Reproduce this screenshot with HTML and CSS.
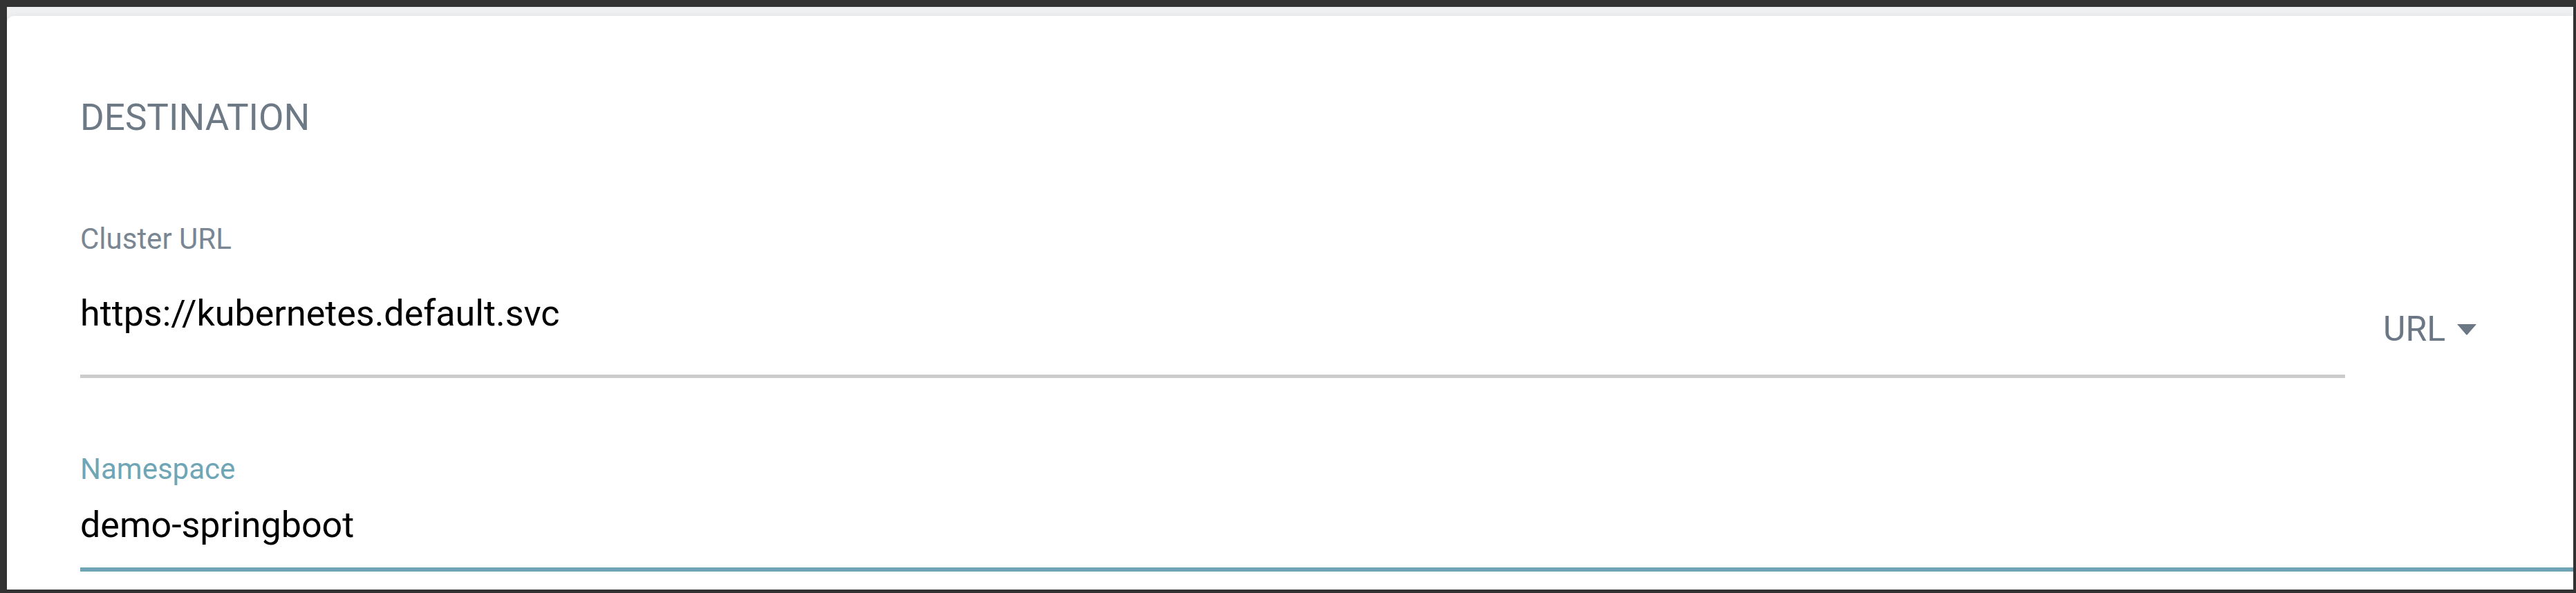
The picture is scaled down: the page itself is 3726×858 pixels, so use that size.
FILE: index.html
```html
<!DOCTYPE html>
<html lang="en">
<head>
    <meta charset="UTF-8">
    <meta name="viewport" content="width=device-width, initial-scale=1.0">
    <title>Destination</title>
    <link rel="stylesheet" href="styles.css">
</head>
<body>
    <div id="panel">
        <div class="card">
            <h2 class="section-title">DESTINATION</h2>

            <!-- Cluster URL -->
            <div class="field field-cluster">
                <label class="field-label">Cluster URL</label>
                <div class="field-row">
                    <div class="input-wrap">
                        <span class="field-value">https://kubernetes.default.svc</span>
                    </div>
                    <div class="dropdown">
                        <span>URL</span>
                        <svg class="caret" width="30" height="17" viewBox="0 0 30 17">
                            <path d="M1 1 H29 L16 16 Q15 17 14 16 Z" fill="#6b7785"/>
                        </svg>
                    </div>
                </div>
            </div>

            <!-- Namespace -->
            <div class="field field-namespace">
                <label class="field-label active">Namespace</label>
                <div class="input-wrap focused">
                    <span class="field-value">demo-springboot</span>
                </div>
            </div>
        </div>
    </div>
</body>
</html>
```

FILE: styles.css
```css
/* styles.css */
html, body {
height: 100%;
}

body {
margin: 0;
background-color: #333333;
padding: 10px 4px 5px 10px;
box-sizing: border-box;
font-family: Roboto, "Liberation Sans", sans-serif;
}

#panel {
height: 100%;
background-color: #eff0f2;
padding-top: 13px;
box-sizing: border-box;
}

.card {
height: 100%;
box-sizing: border-box;
background-color: white;
border-radius: 10px 0 0 0;
box-shadow: 0 0 8px rgba(0, 0, 0, 0.06);
padding: 115px 0 0 106px;
}

.section-title {
margin: 0;
font-size: 53px;
line-height: 64px;
font-weight: 400;
color: #6d7985;
}

.field-label {
display: block;
font-size: 42px;
line-height: 50px;
color: #7a8691;
}

.field-label.active {
color: #6fa6b6;
}

.field-value {
display: block;
font-size: 52px;
line-height: 62px;
color: #000;
}

.field-cluster {
margin-top: 119px;
}

.field-cluster .field-label {
margin-bottom: 52px;
}

.field-row {
display: flex;
}

.input-wrap {
flex: 1;
padding-bottom: 57px;
border-bottom: 5px solid #cccccc;
}

.dropdown {
width: 330px;
box-sizing: border-box;
padding: 23px 0 0 55px;
display: flex;
align-items: flex-start;
gap: 16px;
font-size: 50px;
line-height: 60px;
color: #6b7785;
}

.caret {
margin-top: 22px;
}

.field-namespace {
margin-top: 107px;
}

.field-namespace .field-label {
margin-bottom: 25px;
}

.input-wrap.focused {
padding-bottom: 30px;
border-bottom: 6px solid #6ea4b5;
}
```
